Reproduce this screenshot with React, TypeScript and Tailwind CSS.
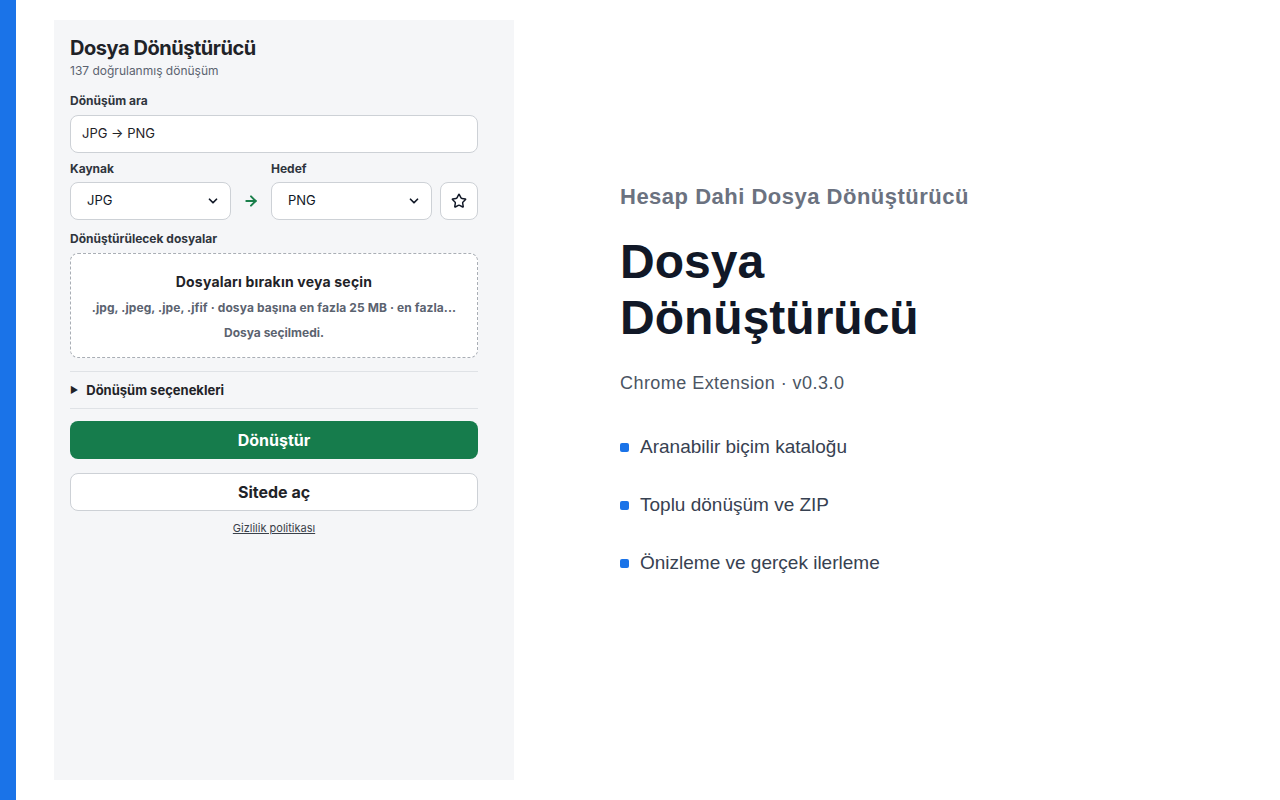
import { ArrowRight, ChevronDown, Star } from "lucide-react";

const features = [
  "Aranabilir biçim kataloğu",
  "Toplu dönüşüm ve ZIP",
  "Önizleme ve gerçek ilerleme",
];

function SelectBox({ value }: { value: string }) {
  return (
    <div className="flex h-[38px] w-[161px] items-center rounded-lg border border-[#cdd1d6] bg-white pl-4 pr-2.5 text-[13px] text-[#111827]">
      <span className="flex-1">{value}</span>
      <ChevronDown className="h-3.5 w-3.5 text-[#111827]" strokeWidth={3} />
    </div>
  );
}

export default function App() {
  return (
    <div className="flex h-[800px] w-[1280px] bg-white">
      {/* Side accent */}
      <div className="w-4 shrink-0 bg-[#1a73e8]" />

      {/* Popup preview */}
      <div className="ml-[38px] mt-5 h-[760px] w-[460px] shrink-0 bg-[#f5f6f8] p-4 font-['Inter',sans-serif] text-[#1f2328]">
        <div className="w-[408px]">
          <h1 className="text-[20px] font-bold leading-6 tracking-[-0.45px]">Dosya Dönüştürücü</h1>
          <p className="mt-[3px] text-[12px] leading-4 text-[#5b6370]">137 doğrulanmış dönüşüm</p>

          <label className="mt-[14px] block text-[12px] font-bold leading-4 text-[#2f353d]">Dönüşüm ara</label>
          <div className="mt-1.5 flex h-[38px] items-center rounded-lg border border-[#cdd1d6] bg-white px-[11px] text-[13px]">
            JPG → PNG
          </div>

          <div className="mt-2 flex">
            <span className="w-[201px] text-[12px] font-bold leading-4 text-[#2f353d]">Kaynak</span>
            <span className="text-[12px] font-bold leading-4 text-[#2f353d]">Hedef</span>
          </div>
          <div className="mt-[5px] flex items-center">
            <SelectBox value="JPG" />
            <div className="flex w-10 justify-center">
              <ArrowRight className="h-4 w-4 text-[#1a7f4b]" strokeWidth={3} />
            </div>
            <SelectBox value="PNG" />
            <div className="ml-2 flex h-[38px] w-[38px] items-center justify-center rounded-lg border border-[#cdd1d6] bg-white">
              <Star className="h-4 w-4 text-[#111827]" strokeWidth={2.2} />
            </div>
          </div>

          <label className="mt-[11px] block text-[12px] font-bold leading-4 text-[#2f353d]">Dönüştürülecek dosyalar</label>
          <div className="mt-1.5 flex h-[105px] flex-col items-center rounded-lg border border-dashed border-[#a9aeb5] bg-white px-3 pt-[18px] text-center">
            <div className="text-[14px] font-bold leading-5 tracking-[0.2px] text-[#1f2328]">Dosyaları bırakın veya seçin</div>
            <div className="mt-2 whitespace-nowrap text-[12px] font-bold leading-4 tracking-[0.1px] text-[#5b6370]">
              .jpg, .jpeg, .jpe, .jfif · dosya başına en fazla 25 MB · en fazla...
            </div>
            <div className="mt-[9px] text-[12px] font-bold leading-4 text-[#5b6370]">Dosya seçilmedi.</div>
          </div>

          <div className="mt-[13px] flex items-center gap-2 border-y border-[#dfe2e6] py-[10px]">
            <span className="text-[9px] leading-4 text-[#1f2328]">▶</span>
            <span className="text-[13px] font-bold leading-4">Dönüşüm seçenekleri</span>
          </div>

          <button className="mt-[12px] flex h-[38px] w-full items-center justify-center rounded-lg bg-[#167c4c] text-[16px] font-bold text-white">
            Dönüştür
          </button>
          <button className="mt-[14px] flex h-[38px] w-full items-center justify-center rounded-lg border border-[#cdd1d6] bg-white text-[16px] font-bold text-[#1f2328]">
            Sitede aç
          </button>
          <div className="mt-[10px] text-center text-[11px] leading-[14px]">
            <a className="text-[#3a414a] underline">Gizlilik politikası</a>
          </div>
        </div>
      </div>

      {/* Store listing copy */}
      <div className="ml-[106px] pt-[183px] font-['Liberation_Sans',Arial,sans-serif]">
        <div className="text-[22px] font-bold leading-7 tracking-[0.5px] text-[#6b7280]">Hesap Dahi Dosya Dönüştürücü</div>
        <h2 className="mt-[23px] text-[48px] font-bold leading-[56px] text-[#111827]">
          Dosya
          <br />
          Dönüştürücü
        </h2>
        <div className="mt-[23px] text-[18px] leading-7 tracking-[0.45px] text-[#4b5563]">Chrome Extension · v0.3.0</div>
        <ul className="mt-9 flex flex-col gap-[30px]">
          {features.map((f) => (
            <li key={f} className="flex items-center gap-[11px] text-[19px] leading-7 text-[#374151]">
              <span className="h-[9px] w-[9px] rounded-[2px] bg-[#1a73e8]" />
              {f}
            </li>
          ))}
        </ul>
      </div>
    </div>
  );
}
